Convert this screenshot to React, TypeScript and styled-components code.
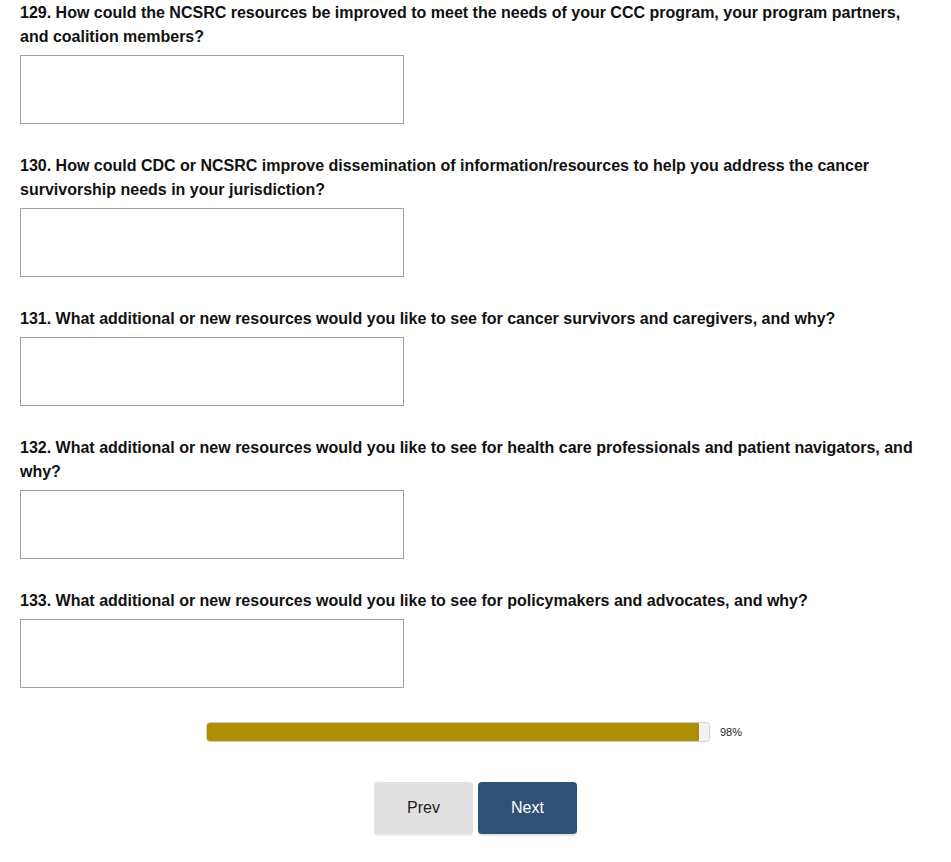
import styled, { createGlobalStyle } from "styled-components";

const GlobalStyle = createGlobalStyle`
  body {
    margin: 0;
    background: #ffffff;
    font-family: "Liberation Sans", Arial, sans-serif;
  }
`;

const questions = [
  {
    id: 129,
    text: "How could the NCSRC resources be improved to meet the needs of your CCC program, your program partners, and coalition members?",
  },
  {
    id: 130,
    text: "How could CDC or NCSRC improve dissemination of information/resources to help you address the cancer survivorship needs in your jurisdiction?",
  },
  {
    id: 131,
    text: "What additional or new resources would you like to see for cancer survivors and caregivers, and why?",
  },
  {
    id: 132,
    text: "What additional or new resources would you like to see for health care professionals and patient navigators, and why?",
  },
  {
    id: 133,
    text: "What additional or new resources would you like to see for policymakers and advocates, and why?",
  },
];

export default function App() {
  const progress = 98;
  return (
    <>
      <GlobalStyle />
      <Page>
        {questions.map((q) => (
          <Question key={q.id}>
            <Label htmlFor={`q${q.id}`}>{`${q.id}. ${q.text}`}</Label>
            <Answer id={`q${q.id}`} />
          </Question>
        ))}
        <ProgressRow>
          <Track>
            <Fill style={{ width: `${progress}%` }} />
          </Track>
          <Percent>{progress}%</Percent>
        </ProgressRow>
        <Buttons>
          <NavButton>Prev</NavButton>
          <NavButton primary>Next</NavButton>
        </Buttons>
      </Page>
    </>
  );
}

const Page = styled.div`
  padding: 1px 20px 28px;
  display: flex;
  flex-direction: column;
`;

const Question = styled.div`
  display: flex;
  flex-direction: column;
  gap: 6px;
  margin-bottom: 30px;
`;

const Label = styled.label`
  font-size: 16px;
  font-weight: bold;
  line-height: 24px;
  color: #111111;
`;

const Answer = styled.textarea`
  box-sizing: border-box;
  width: 384px;
  height: 69px;
  border: 1px solid #a0a0a0;
  border-radius: 0;
  resize: none;
  padding: 4px;
  font-family: "Liberation Sans", Arial, sans-serif;
`;

const ProgressRow = styled.div`
  display: flex;
  align-items: center;
  justify-content: center;
  gap: 10px;
  margin-top: 4px;
`;

const Track = styled.div`
  box-sizing: border-box;
  width: 504px;
  height: 20px;
  padding: 0;
  border: 1px solid #cfcfcf;
  border-radius: 4px;
  background: #f2f2f2;
  overflow: hidden;
`;

const Fill = styled.div`
  height: 100%;
  background: #ad8e00;
`;

const Percent = styled.span`
  font-size: 11px;
  color: #1a1a2e;
  width: 25px;
`;

const Buttons = styled.div`
  display: flex;
  justify-content: center;
  gap: 5px;
  margin-top: 40px;
`;

const NavButton = styled.button<{ primary?: boolean }>`
  width: 99px;
  height: 52px;
  border: none;
  border-radius: 4px;
  font-family: "Liberation Sans", Arial, sans-serif;
  font-size: 16px;
  cursor: pointer;
  background: ${(p) => (p.primary ? "#2f5176" : "#e0e0e0")};
  color: ${(p) => (p.primary ? "#ffffff" : "#222222")};
  box-shadow: 0 2px 0 ${(p) => (p.primary ? "#e4e4e4" : "#ececec")};
`;
